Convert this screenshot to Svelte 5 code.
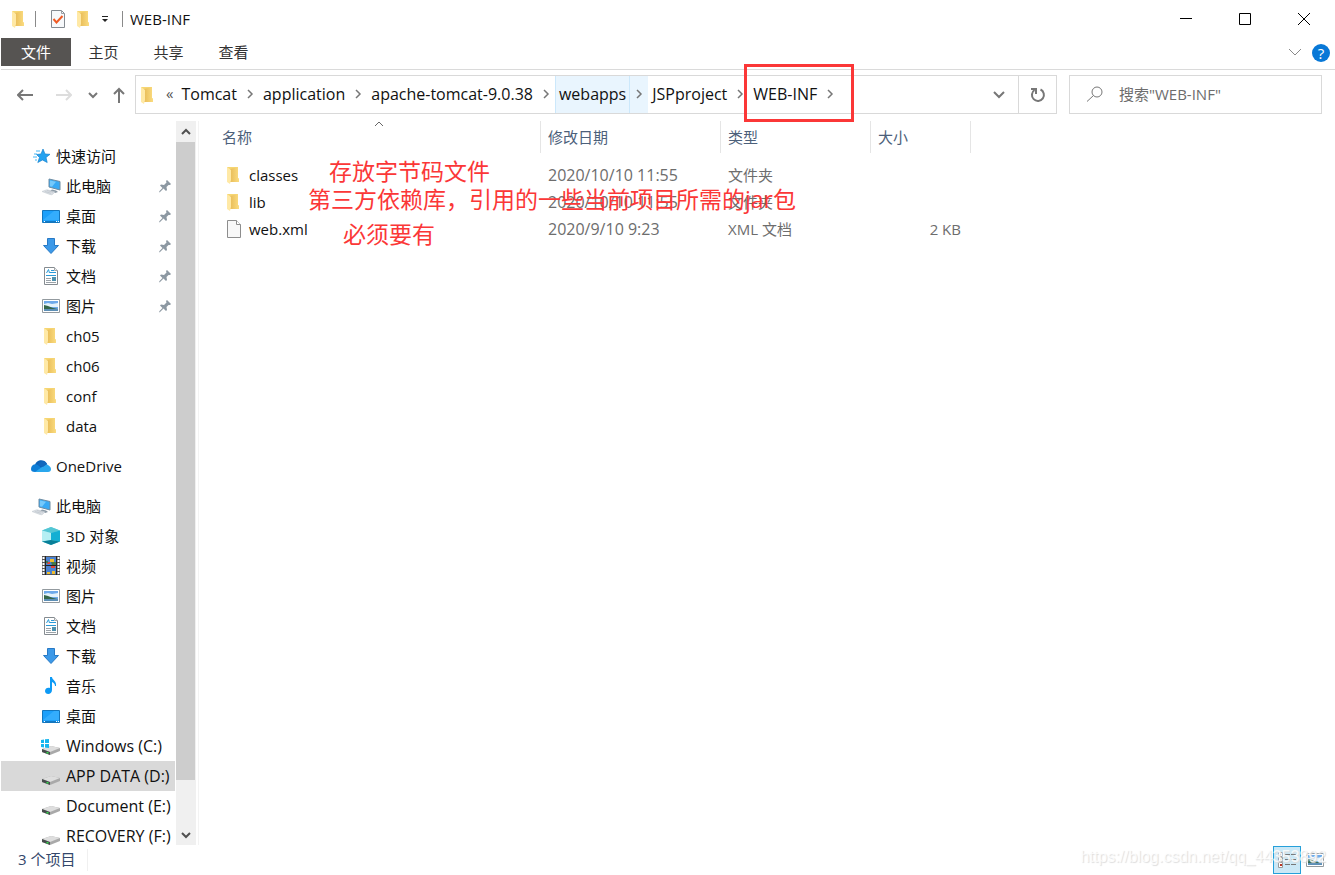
<script lang="ts">
  type Place = { name: string; icon: string; pinned?: boolean };
  type Entry = { name: string; icon: string; date: string; kind: string; size: string; note: string };

  const quick: Place[] = [
    { name: '此电脑', icon: 'pc', pinned: true },
    { name: '桌面', icon: 'desktop', pinned: true },
    { name: '下载', icon: 'download', pinned: true },
    { name: '文档', icon: 'doc', pinned: true },
    { name: '图片', icon: 'picture', pinned: true },
    { name: 'ch05', icon: 'folder' },
    { name: 'ch06', icon: 'folder' },
    { name: 'conf', icon: 'folder' },
    { name: 'data', icon: 'folder' },
  ];

  const computer: Place[] = [
    { name: '3D 对象', icon: 'cube' },
    { name: '视频', icon: 'video' },
    { name: '图片', icon: 'picture' },
    { name: '文档', icon: 'doc' },
    { name: '下载', icon: 'download' },
    { name: '音乐', icon: 'music' },
    { name: '桌面', icon: 'desktop' },
    { name: 'Windows (C:)', icon: 'windisk' },
    { name: 'APP DATA (D:)', icon: 'disk' },
    { name: 'Document (E:)', icon: 'disk' },
    { name: 'RECOVERY (F:)', icon: 'disk' },
  ];

  const crumbs = ['Tomcat', 'application', 'apache-tomcat-9.0.38', 'webapps', 'JSPproject', 'WEB-INF'];

  const entries: Entry[] = [
    { name: 'classes', icon: 'folder', date: '2020/10/10 11:55', kind: '文件夹', size: '', note: '存放字节码文件' },
    { name: 'lib', icon: 'folder', date: '2020/10/10 11:55', kind: '文件夹', size: '', note: '第三方依赖库，引用的一些当前项目所需的jar包' },
    { name: 'web.xml', icon: 'file', date: '2020/9/10 9:23', kind: 'XML 文档', size: '2 KB', note: '必须要有' },
  ];

  let selected = $state('APP DATA (D:)');
  let hovered = $state('webapps');
  let query = $state('');
</script>

{#snippet icon(name: string)}
  <svg class="icon" width="20" height="20" viewBox="0 0 20 20" aria-hidden="true">
    {#if name === 'folder'}
      <path d="M3 2h11v11l1 1v3H6z" fill="#f6d673" />
      <path d="M6 4l8-2v11l1 1v3H6z" fill="url(#fold)" />
      <path d="M3 2l4 3v10l-1 4-3-2z" fill="#ffe9a6" />
    {:else if name === 'file'}
      <path d="M3.500 1.500h9l4 4v13h-13z" fill="#f8f8f8" stroke="#8d8d8d" />
      <path d="M12.500 1.500v4h4" fill="#fff" stroke="#8d8d8d" />
    {:else if name === 'star'}
      <path d="M12 3l2 5 5 .3-4 3.200 1.200 5-4.700-2.500-4.700 2.500 1.700-5L5.500 8.500l4.500-.5z" fill="#24a2f0" stroke="#1583cf" stroke-width=".7" />
      <path d="M5 5h4M3 8h3M2 11h4M4 14h2" stroke="#45b6f5" stroke-width="1" />
    {:else if name === 'pc'}
      <path d="M8 3l11 2.500v8.500l-11-3z" fill="#38a9f4" stroke="#6f8ca2" />
      <path d="M9 4.500l6 1.300-4 5-2-.5z" fill="#75c9fb" />
      <path d="M11 13.500l4 1 2 1.500-3 1-5-2z" fill="#8b99a5" />
      <path d="M1 15.500l5-1.800 8 2.300-3 2.800-2-.3z" fill="#d9dee3" stroke="#c4cbd1" stroke-width=".6" />
      <path d="M4 15.500l6 1.800M6 14.500l6 1.700" stroke="#b9c0c7" stroke-width=".6" />
    {:else if name === 'desktop'}
      <path d="M1.500 4.500h17v12h-17z" fill="#1da0fa" stroke="#1476bd" />
      <path d="M2 14l11-9h5v9z" fill="#45b5ff" opacity=".6" />
      <path d="M3 15.500h1M15 15.500h1M17 15.500h1" stroke="#fff" />
      <path d="M4 15.500h11" stroke="#1279c4" />
    {:else if name === 'download'}
      <path d="M6.500 2.500h7v7h4l-7.500 8-7.500-8h4z" fill="#3c99e8" stroke="#2779c5" />
    {:else if name === 'doc'}
      <path d="M3.500 1.500h10l3 3v14h-13z" fill="#fff" stroke="#858b90" />
      <path d="M13.500 1.500v3h3" fill="#eee" stroke="#a2a6aa" />
      <path d="M5.500 7l2-3.500 1 3.500M10 4.500h3M9 6.500h6M5 9.500h10" fill="none" stroke="#2b9bd8" />
      <path d="M5 12.500h5M5 14.500h5M5 16.500h10" stroke="#9ba2a8" />
      <path d="M11 11h4v4h-4z" fill="#4f91ad" />
    {:else if name === 'picture'}
      <path d="M1.500 3.500h17v13h-17z" fill="#fff" stroke="#939a9f" />
      <path d="M3 5h14v10H3z" fill="#6ea9ea" />
      <path d="M3 8l4-1 4 1 6-1v4H3z" fill="#e4f2fb" />
      <path d="M3 9l4 1 5 2 5 1H3z" fill="#35674b" />
      <path d="M3 13h14v2H3z" fill="#5d8fb6" />
    {:else if name === 'cube'}
      <path d="M10 1l9 3.500v11L10 19l-9-3.500v-11z" fill="#6bd3e0" />
      <path d="M10 1l9 3.500L10 7 1 4.500z" fill="#54c6d4" />
      <path d="M1 4.500L10 7v7l-9 1.500z" fill="#b5eff3" />
      <path d="M10 7l9-2.500v11L10 14z" fill="#13afd3" />
      <path d="M1 15.500L10 14l9 1.500L10 19z" fill="#087f98" />
    {:else if name === 'video'}
      <path d="M1 0h18v19H1z" fill="#555" />
      <path d="M5 1h10v8H5zM5 10h10v8H5z" fill="#4b82d1" />
      <path d="M2.500 1v18M17.500 1v18" stroke="#fff" stroke-width="2" stroke-dasharray="2 1" />
      <path d="M4.500 0v19M15.500 0v19M4 9.500h12" stroke="#222" />
      <path d="M9 3h4v3H9zM6 16h3v2H6zM11 15h3v3h-3z" fill="#f1be2f" />
      <path d="M6 6h3v2H6zM10 10h4v2h-4z" fill="#df4639" />
      <path d="M10 6h5v3h-4zM5 5h2v2H5z" fill="#46794a" />
    {:else if name === 'music'}
      <path d="M9 1h2c0 3 5 4 4 9h-1c0-2-1-3-3-4v8c0 5-7 5-7 1 0-3 3-4 5-3z" fill="#0d9af5" />
    {:else if name === 'cloud'}
      <path d="M4 9c1-5 9-7 12-1l-4 7z" fill="#0b62b8" />
      <path d="M0 13c0-4 4-6 7-4l8 7H4c-3 0-4-1-4-3z" fill="#0d7ed7" />
      <path d="M4 16l7-5c2-2 4-3 6-2 4 2 4 7 0 7z" fill="#2aa7ed" />
      <path d="M8 7c3-3 7-2 8 1l-4 3-5-2z" fill="#1268bd" />
    {:else if name === 'disk' || name === 'windisk'}
      <path d="M1 13l9-3 9 2v3L9 19l-8-3z" fill="#a9a9a9" />
      <path d="M1 13l9-3 9 2-10 4z" fill="#dedede" />
      <path d="M1 13l8 3v3l-8-3z" fill="#454b4b" />
      <path d="M6.500 16v1.500" stroke="#35dd4f" stroke-width="2" />
      {#if name === 'windisk'}
        <path d="M0 4l3-.5V7H0zM4 3.300L8 3v4H4zM0 8h3v3.500L0 11zM4 8h4v4l-4-.5z" fill="#17b6ef" />
      {/if}
    {/if}
  </svg>
{/snippet}

{#snippet chevron(dir: string)}
  <svg class="chevron {dir}" width="12" height="12" viewBox="0 0 12 12" aria-hidden="true">
    <path d="M4 2l4 4-4 4" />
  </svg>
{/snippet}

{#snippet place(item: Place)}
  <li>
    <button
      class="place child"
      class:drive={item.icon.endsWith('disk')}
      class:selected={selected === item.name}
      onclick={() => (selected = item.name)}
    >
      {@render icon(item.icon)}
      <span>{item.name}</span>
      {#if item.pinned}
        <svg class="pin" width="14" height="14" viewBox="0 0 14 14" aria-hidden="true">
          <path d="M8 2l1-1 4 4-1 1h-1.500l-2 2 .5 3-1 1-2.500-2.500L2 13l-1 .5.500-1.500L4.500 9 2 6.500l1-1 3 .5 2.500-2.500z" fill="#8c98a2" />
        </svg>
      {/if}
    </button>
  </li>
{/snippet}

<div class="window">
  <svg class="defs" width="0" height="0" aria-hidden="true">
    <linearGradient id="fold" x1="0" x2="1">
      <stop offset="0" stop-color="#e8bc58" />
      <stop offset="1" stop-color="#fbdc80" />
    </linearGradient>
  </svg>

  <header class="titlebar">
    {@render icon('folder')}
    <span class="bar"></span>
    <button class="tool props" aria-label="属性">
      <svg width="16" height="20" viewBox="0 0 16 20">
        <path d="M1.500 1.500h10l3 3v14h-13z" fill="#f7f9fb" stroke="#858b91" />
        <path d="M11.500 1.500v3h3" fill="none" stroke="#9a9fa4" />
        <path d="M3.500 10l3 3.500 6-6.500" fill="none" stroke="#ef5b25" stroke-width="2" />
      </svg>
    </button>
    <button class="tool" aria-label="新建文件夹">{@render icon('folder')}</button>
    <button class="tool more" aria-label="自定义快速访问工具栏">
      <svg width="8" height="8" viewBox="0 0 8 8"><path d="M1 1.500h6" stroke="#222" /><path d="M1 4h6L4 7z" fill="#222" /></svg>
    </button>
    <span class="bar"></span>
    <h1>WEB-INF</h1>
    <div class="controls">
      <button aria-label="最小化"><svg width="12" height="12" viewBox="0 0 12 12"><path d="M0 5.500h12" /></svg></button>
      <button aria-label="最大化"><svg width="12" height="12" viewBox="0 0 12 12"><path d="M.5.5h11v11H.5z" /></svg></button>
      <button aria-label="关闭"><svg width="12" height="12" viewBox="0 0 12 12"><path d="M0 0l12 12M12 0L0 12" /></svg></button>
    </div>
  </header>

  <nav class="tabs">
    <button class="active">文件</button>
    <button>主页</button>
    <button>共享</button>
    <button>查看</button>
    <button class="expand" aria-label="展开功能区">
      <svg width="12" height="8" viewBox="0 0 12 8"><path d="M0 1l6 6 6-6" fill="none" stroke="#8a8a8a" /></svg>
    </button>
    <button class="help" aria-label="帮助">?</button>
  </nav>

  <div class="addressbar">
    <div class="history">
      <button aria-label="后退"><svg width="16" height="12" viewBox="0 0 16 12"><path d="M16 6H1M6 1L1 6l5 5" fill="none" stroke="#777" stroke-width="2" /></svg></button>
      <button aria-label="前进" disabled><svg width="16" height="12" viewBox="0 0 16 12"><path d="M0 6h15M10 1l5 5-5 5" fill="none" stroke="#ddd" stroke-width="2" /></svg></button>
      <button class="recent" aria-label="最近浏览的位置"><svg width="10" height="8" viewBox="0 0 10 8"><path d="M1 2l4 4 4-4" fill="none" stroke="#777" stroke-width="2" /></svg></button>
      <button class="up" aria-label="上移"><svg width="12" height="16" viewBox="0 0 12 16"><path d="M6 16V2M1 7l5-5 5 5" fill="none" stroke="#777" stroke-width="2" /></svg></button>
    </div>
    <div class="path">
      {@render icon('folder')}
      <span class="overflow">«</span>
      {#each crumbs as crumb}
        <div class="crumb" class:hot={hovered === crumb} class:marked={crumb === 'WEB-INF'}>
          <button onmouseenter={() => (hovered = crumb)}>{crumb}</button>
          <span class="sep">{@render chevron('right')}</span>
        </div>
      {/each}
      <button class="drop" aria-label="以前的位置"><svg width="12" height="8" viewBox="0 0 12 8"><path d="M1 1l5 5 5-5" fill="none" stroke="#777" stroke-width="2" /></svg></button>
      <button class="refresh" aria-label="刷新">
        <svg width="16" height="16" viewBox="0 0 16 16">
          <path d="M10.500 2.500a6 6 0 1 1-6 .5" fill="none" stroke="#777" stroke-width="2" />
          <path d="M1 2h5v5" fill="none" stroke="#777" stroke-width="2" />
        </svg>
      </button>
    </div>
    <label class="search">
      <svg width="16" height="16" viewBox="0 0 16 16" aria-hidden="true"><circle cx="10" cy="6" r="5" fill="none" stroke="#777" /><path d="M6.500 9.500L0 15.500" stroke="#777" /></svg>
      <input type="text" placeholder={'搜索"WEB-INF"'} aria-label="搜索" bind:value={query} />
    </label>
  </div>

  <main>
    <aside>
      <div class="tree">
        <button class="place">{@render icon('star')}<span>快速访问</span></button>
        <ul>
          {#each quick as item}{@render place(item)}{/each}
        </ul>
        <button class="place">{@render icon('cloud')}<span>OneDrive</span></button>
        <button class="place">{@render icon('pc')}<span>此电脑</span></button>
        <ul>
          {#each computer as item}{@render place(item)}{/each}
        </ul>
      </div>
      <div class="scrollbar">
        <button aria-label="向上滚动">{@render chevron('top')}</button>
        <div class="track"><div class="thumb"></div></div>
        <button aria-label="向下滚动">{@render chevron('bottom')}</button>
      </div>
    </aside>

    <section class="files">
      <table>
        <thead>
          <tr>
            <th class="name"><div>名称<svg class="sort" width="10" height="6" viewBox="0 0 10 6"><path d="M1 5l4-4 4 4" fill="none" stroke="#666" /></svg></div></th>
            <th class="date"><div>修改日期</div></th>
            <th class="kind"><div>类型</div></th>
            <th class="size"><div>大小</div></th>
          </tr>
        </thead>
        <tbody>
          {#each entries as entry, i}
            <tr>
              <td>
                <div class="file">
                  {@render icon(entry.icon)}
                  <span>{entry.name}</span>
                  <span class="note note-{i}">{entry.note}</span>
                </div>
              </td>
              <td class="time">{entry.date}</td>
              <td>{entry.kind}</td>
              <td class="num">{entry.size}</td>
            </tr>
          {/each}
        </tbody>
      </table>
    </section>
  </main>

  <footer>
    <span class="count">3 个项目</span>
    <button class="view on" aria-label="详细信息">
      <svg width="20" height="18" viewBox="0 0 20 18">
        <path d="M1.500 1.500h4v4h-4zM1.500 6.500h4v4h-4zM1.500 11.500h4v5h-4z" fill="#fff" stroke="#999" />
        <path d="M8 3.500h5M14 3.500h5M8 8.500h5M14 8.500h5M8 13.500h5M14 13.500h5" stroke="#777" />
        <path d="M3 3h1v1H3z" fill="#79b" /><path d="M3 8h1v1H3z" fill="#c93" /><path d="M3 13h2v2H3z" fill="#b32" />
      </svg>
    </button>
    <button class="view" aria-label="大图标">{@render icon('picture')}</button>
    <span class="watermark">https://blog.csdn.net/qq_44353892</span>
  </footer>
</div>

<style>
  :global(body) {
    margin: 0;
    background: #fff;
  }

  .window {
    display: flex;
    flex-direction: column;
    height: 100vh;
    overflow: hidden;
    box-sizing: border-box;
    padding-left: 1px;
    font-family: 'Open Sans', 'Noto Sans CJK SC', sans-serif;
    font-size: 15px;
    line-height: 20px;
    color: #111;
  }

  .defs {
    position: absolute;
  }

  button {
    padding: 0;
    border: 0;
    background: none;
    font: inherit;
    color: inherit;
  }

  svg {
    display: block;
    flex: none;
  }

  /* title bar */
  .titlebar {
    display: flex;
    align-items: center;
    height: 38px;
    flex: none;
    padding: 0 2px 0 8px;
  }
  .bar {
    width: 1px;
    height: 16px;
    margin: 0 7px 0 6px;
    background: #8a8a8a;
  }
  .props {
    margin: 0 8px 0 7px;
  }
  .more {
    margin: 0 7px;
  }
  h1 {
    margin: 0;
    font-size: 15px;
    font-weight: 400;
  }
  .controls {
    display: flex;
    margin-left: auto;
  }
  .controls button {
    display: flex;
    align-items: center;
    justify-content: center;
    width: 59px;
    height: 38px;
  }
  .controls path {
    fill: none;
    stroke: #000;
  }

  /* ribbon tabs */
  .tabs {
    display: flex;
    align-items: flex-start;
    flex: none;
    height: 31px;
    border-bottom: 1px solid #dadada;
    color: #333;
  }
  .tabs button {
    width: 65px;
    height: 28px;
  }
  .tabs .active {
    width: 70px;
    background: #565452;
    color: #fff;
  }
  .tabs .expand {
    display: flex;
    align-items: center;
    justify-content: center;
    width: 24px;
    margin-left: auto;
  }
  .tabs .help {
    width: 18px;
    height: 18px;
    margin: 6px 5px 0;
    border-radius: 50%;
    background: #0878d7;
    color: #fff;
    line-height: 18px;
  }

  /* address row */
  .addressbar {
    display: flex;
    flex: none;
    height: 39px;
    padding: 5px 13px 7px 0;
  }
  .history {
    display: flex;
    align-items: center;
    width: 134px;
    padding-left: 16px;
    box-sizing: border-box;
    gap: 23px;
  }
  .history .recent {
    margin: 0 -8px 0 -7px;
  }
  .path {
    display: flex;
    flex: 1;
    align-items: center;
    min-width: 0;
    border: 1px solid #d9d9d9;
  }
  .path > .icon {
    margin-left: 2px;
  }
  .overflow {
    margin: 0 4px 4px 8px;
    color: #555;
  }
  .crumb {
    position: relative;
    display: flex;
    height: 37px;
    font-size: 16px;
  }
  .crumb button {
    padding: 0 3px 2px;
    border: 1px solid transparent;
    border-width: 0 1px;
  }
  .sep {
    display: flex;
    align-items: center;
    width: 18px;
    justify-content: center;
    padding-bottom: 2px;
  }
  .hot,
  .hot button {
    background: #e9f5fe;
  }
  .hot button {
    border-color: #cce8fb;
  }
  .marked::after {
    content: '';
    position: absolute;
    inset: -12px -15px -9px -5px;
    border: 3px solid #fb3737;
  }
  .chevron path {
    fill: none;
    stroke: #777;
    stroke-width: 1.5;
  }
  .chevron.top {
    transform: rotate(-90deg);
  }
  .chevron.bottom {
    transform: rotate(90deg);
  }
  .drop,
  .refresh {
    display: flex;
    align-items: center;
    justify-content: center;
    width: 38px;
    height: 37px;
  }
  .drop {
    margin-left: auto;
  }
  .refresh {
    border-left: 1px solid #d9d9d9;
  }
  .search {
    display: flex;
    align-items: center;
    width: 253px;
    box-sizing: border-box;
    margin-left: 12px;
    padding: 0 0 1px 17px;
    gap: 16px;
    border: 1px solid #d9d9d9;
  }
  .search input {
    width: 100%;
    min-width: 0;
    padding: 0;
    border: 0;
    outline: 0;
    background: none;
    font: inherit;
  }
  .search input::placeholder {
    color: #6d6d6d;
    opacity: 1;
  }

  /* navigation pane */
  main {
    display: flex;
    flex: 1;
    min-height: 0;
  }
  aside {
    display: flex;
    width: 197px;
    flex: none;
    border-right: 1px solid #f3f3f3;
  }
  .tree {
    width: 174px;
    padding-top: 20px;
    overflow: hidden;
  }
  ul {
    margin: 0 0 10px;
    padding: 0;
    list-style: none;
  }
  .place {
    display: flex;
    align-items: center;
    width: 100%;
    height: 30px;
    padding-left: 30px;
    gap: 5px;
    text-align: left;
    white-space: nowrap;
  }
  ul + .place + .place {
    margin-top: 10px;
  }
  .child {
    padding-left: 40px;
  }
  .drive {
    font-size: 16px;
  }
  .selected {
    background: #d9d9d9;
  }
  .pin {
    margin: 0 3px 0 auto;
  }
  .scrollbar {
    display: flex;
    flex-direction: column;
    width: 20px;
    margin-left: 1px;
    background: #f0f0f0;
  }
  .scrollbar button {
    display: flex;
    align-items: center;
    justify-content: center;
    height: 21px;
  }
  .scrollbar .chevron path {
    stroke: #505050;
    stroke-width: 2;
  }
  .track {
    flex: 1;
  }
  .thumb {
    height: 93.5%;
    width: 19px;
    background: #cdcdcd;
  }

  /* file list */
  .files {
    flex: 1;
    min-width: 0;
    padding-left: 15px;
  }
  table {
    border-collapse: collapse;
    table-layout: fixed;
    width: 757px;
    color: #6d6d6d;
  }
  th {
    height: 40px;
    padding: 0;
    font-weight: 400;
    text-align: left;
    vertical-align: top;
    color: #4c607a;
  }
  th div {
    position: relative;
    height: 32px;
    padding-left: 7px;
    border-right: 1px solid #e5e5e5;
    line-height: 32px;
  }
  .sort {
    position: absolute;
    top: 0;
    left: 49%;
  }
  .name {
    width: 327px;
  }
  .name div {
    padding-left: 8px;
  }
  .date {
    width: 180px;
  }
  .kind {
    width: 150px;
  }
  .size {
    width: 100px;
  }
  td {
    height: 27px;
    padding: 0 0 0 7px;
    white-space: nowrap;
  }
  .time {
    font-size: 16px;
  }
  td.num {
    padding-right: 10px;
    text-align: right;
  }
  .file {
    position: relative;
    display: flex;
    align-items: center;
    gap: 5px;
    padding-left: 3px;
    color: #111;
  }
  .note {
    position: absolute;
    z-index: 1;
    font-size: 23px;
    line-height: 28px;
    color: #fb3737;
  }
  .note-0 {
    left: 108px;
    top: -8px;
  }
  .note-1 {
    left: 87px;
    top: -7px;
  }
  .note-2 {
    left: 122px;
    top: 1px;
  }

  /* status bar */
  footer {
    position: relative;
    display: flex;
    flex: none;
    align-items: center;
    height: 30px;
    padding-right: 6px;
    color: #33476b;
  }
  .count {
    margin-right: auto;
    padding: 0 12px 2px 17px;
    border-right: 1px solid #f0f0f0;
  }
  .view {
    display: flex;
    align-items: center;
    justify-content: center;
    width: 28px;
    height: 28px;
    box-sizing: border-box;
  }
  .view.on {
    border: 1px solid #26a0da;
    background: #cbe8f6;
  }
  .watermark {
    position: absolute;
    right: 9px;
    bottom: 8px;
    font-family: 'Liberation Sans', Arial, sans-serif;
    font-size: 16px;
    color: rgba(255, 255, 255, 0.8);
    text-shadow: 1px 1px 1px #ddd;
    pointer-events: none;
  }
</style>
